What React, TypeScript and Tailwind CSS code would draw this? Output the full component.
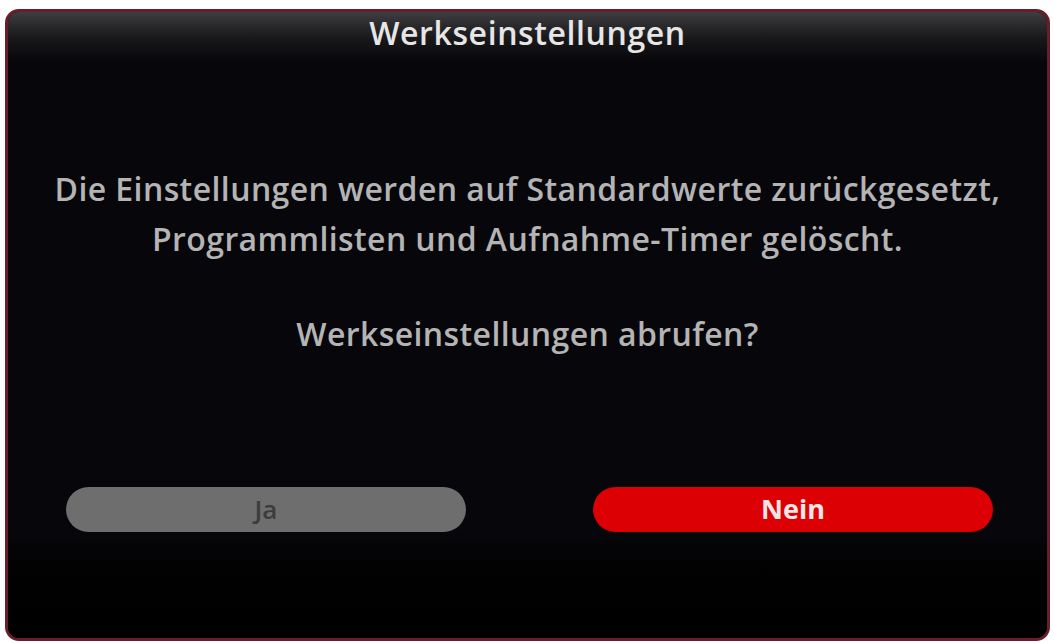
export default function App() {
  return (
    <div className="w-[1054px] h-[643px] bg-white pl-[5px] pr-[4px] pt-[9px] pb-[2px]">
      <div
        className="h-full flex flex-col rounded-[14px] border-[3px] border-[#6b1c2b] bg-[#07070b] overflow-hidden"
        style={{ fontFamily: '"Open Sans", "Noto Sans", sans-serif' }}
      >
        <div className="h-[50px] shrink-0 flex items-start justify-center bg-gradient-to-b from-[#3e3e40] via-[#1a1a1c] to-[#07070b]">
          <span className="text-[32px] font-semibold leading-[42px] text-[#e6e6e6] tracking-[0.6px]">
            Werkseinstellungen
          </span>
        </div>

        <div className="flex flex-col items-center pt-[102px] text-[#b4b4b4] text-[32px] font-semibold tracking-[0.4px]">
          <p className="leading-[50px] text-center">
            Die Einstellungen werden auf Standardwerte zurückgesetzt,
            <br />
            Programmlisten und Aufnahme-Timer gelöscht.
          </p>
          <p className="mt-[45px] leading-[50px]">Werkseinstellungen abrufen?</p>
        </div>

        <div className="mt-[128px] flex justify-between pl-[58px] pr-[54px]">
          <div className="w-[400px] h-[45px] rounded-full bg-[#6e6e6e] flex items-center justify-center text-[26px] font-semibold text-[#3c3c3c]">
            Ja
          </div>
          <div className="w-[400px] h-[45px] rounded-full bg-[#dc0004] flex items-center justify-center text-[27px] font-bold text-[#f4e6e6]">
            Nein
          </div>
        </div>

        <div className="flex-1 bg-gradient-to-b from-[#07070b] to-black" />
      </div>
    </div>
  )
}
